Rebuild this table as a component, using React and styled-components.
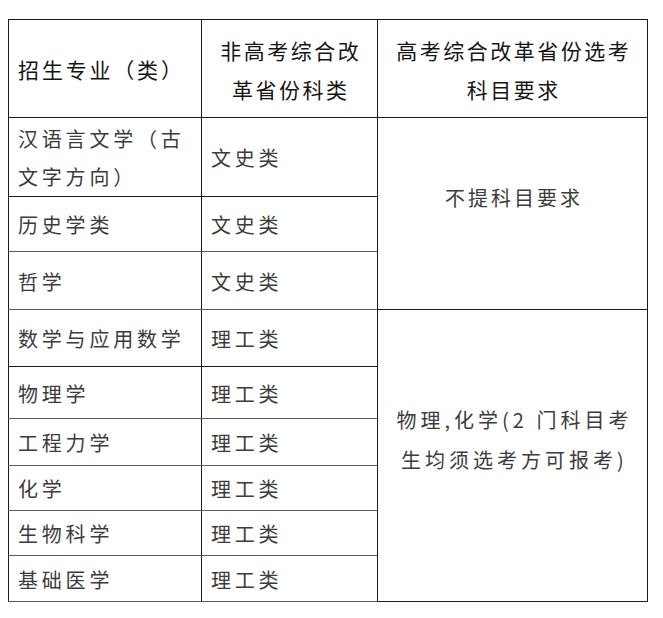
import React from "react";
import styled, { createGlobalStyle } from "styled-components";

const GlobalStyle = createGlobalStyle`
  html, body {
    margin: 0;
    padding: 0;
    background: #ffffff;
  }
  body {
    font-family: "Noto Sans CJK SC", "Noto Sans", sans-serif;
  }
`;

const Page = styled.div`
  width: 663px;
  height: 618px;
  padding: 19px 0 0 8px;
  box-sizing: border-box;
  background: #fff;
`;

const Table = styled.table`
  border-collapse: collapse;
  table-layout: fixed;
  width: 639px;
  border: 1.5px solid #1c1c1c;
`;

const Row = styled.tr`
  height: ${(p) => p.$h}px;
`;

const HeadCell = styled.th`
  border: 1.5px solid #1c1c1c;
  font-weight: 400;
  font-size: 21px;
  line-height: 39px;
  letter-spacing: ${(p) => p.$ls || 3}px;
  color: #151515;
  text-align: center;
  vertical-align: middle;
  padding: 2px ${(p) => p.$pr || 0}px 0 ${(p) => p.$ls || 3}px;
`;

const Cell = styled.td`
  border-left: 1.5px solid #1c1c1c;
  border-right: 1.5px solid #1c1c1c;
  border-top: 1.5px solid ${(p) => (p.$soft ? "#5a5a5a" : "#1c1c1c")};
  border-bottom: 1.5px solid ${(p) => (p.$soft ? "#5a5a5a" : "#1c1c1c")};
  font-size: 20px;
  line-height: 38px;
  letter-spacing: 3.8px;
  color: #3c3c3c;
  text-align: left;
  vertical-align: middle;
  padding: 2px 0 0 9px;
  white-space: nowrap;
`;

const SubjectCell = styled.td`
  border: 1.5px solid #1c1c1c;
  font-size: 20px;
  line-height: 40px;
  letter-spacing: ${(p) => p.$ls || 3}px;
  color: #3c3c3c;
  text-align: center;
  vertical-align: middle;
  padding: 0 0 31px ${(p) => p.$ls || 3}px;
`;

const arts = [
  { name: ["汉语言文学（古", "文字方向）"], type: "文史类", h: 79 },
  { name: ["历史学类"], type: "文史类", h: 55 },
  { name: ["哲学"], type: "文史类", h: 58 },
];

const sciences = [
  { name: "数学与应用数学", h: 57 },
  { name: "物理学", h: 52 },
  { name: "工程力学", h: 47 },
  { name: "化学", h: 45 },
  { name: "生物科学", h: 45 },
  { name: "基础医学", h: 46 },
];

export default function App() {
  return (
    <>
      <GlobalStyle />
      <Page>
        <Table>
          <colgroup>
            <col style={{ width: 193 }} />
            <col style={{ width: 176 }} />
            <col style={{ width: 270 }} />
          </colgroup>
          <tbody>
            <Row $h={98}>
              <HeadCell $ls={2.8} $pr={10}>
                招生专业（类）
              </HeadCell>
              <HeadCell $ls={2.5}>
                非高考综合改
                <br />
                革省份科类
              </HeadCell>
              <HeadCell $ls={2.5}>
                高考综合改革省份选考
                <br />
                科目要求
              </HeadCell>
            </Row>
            {arts.map((r, i) => (
              <Row key={r.type + i} $h={r.h}>
                <Cell $soft={i > 0}>
                  {r.name.map((line, j) => (
                    <React.Fragment key={j}>
                      {j > 0 && <br />}
                      {line}
                    </React.Fragment>
                  ))}
                </Cell>
                <Cell $soft={i > 0}>{r.type}</Cell>
                {i === 0 && (
                  <SubjectCell rowSpan={arts.length} $ls={3}>
                    不提科目要求
                  </SubjectCell>
                )}
              </Row>
            ))}
            {sciences.map((r, i) => (
              <Row key={r.name} $h={r.h}>
                <Cell $soft={i > 0}>{r.name}</Cell>
                <Cell $soft={i > 0}>理工类</Cell>
                {i === 0 && (
                  <SubjectCell rowSpan={sciences.length} $ls={4}>
                    物理,化学(2 门科目考
                    <br />
                    生均须选考方可报考)
                  </SubjectCell>
                )}
              </Row>
            ))}
          </tbody>
        </Table>
      </Page>
    </>
  );
}
